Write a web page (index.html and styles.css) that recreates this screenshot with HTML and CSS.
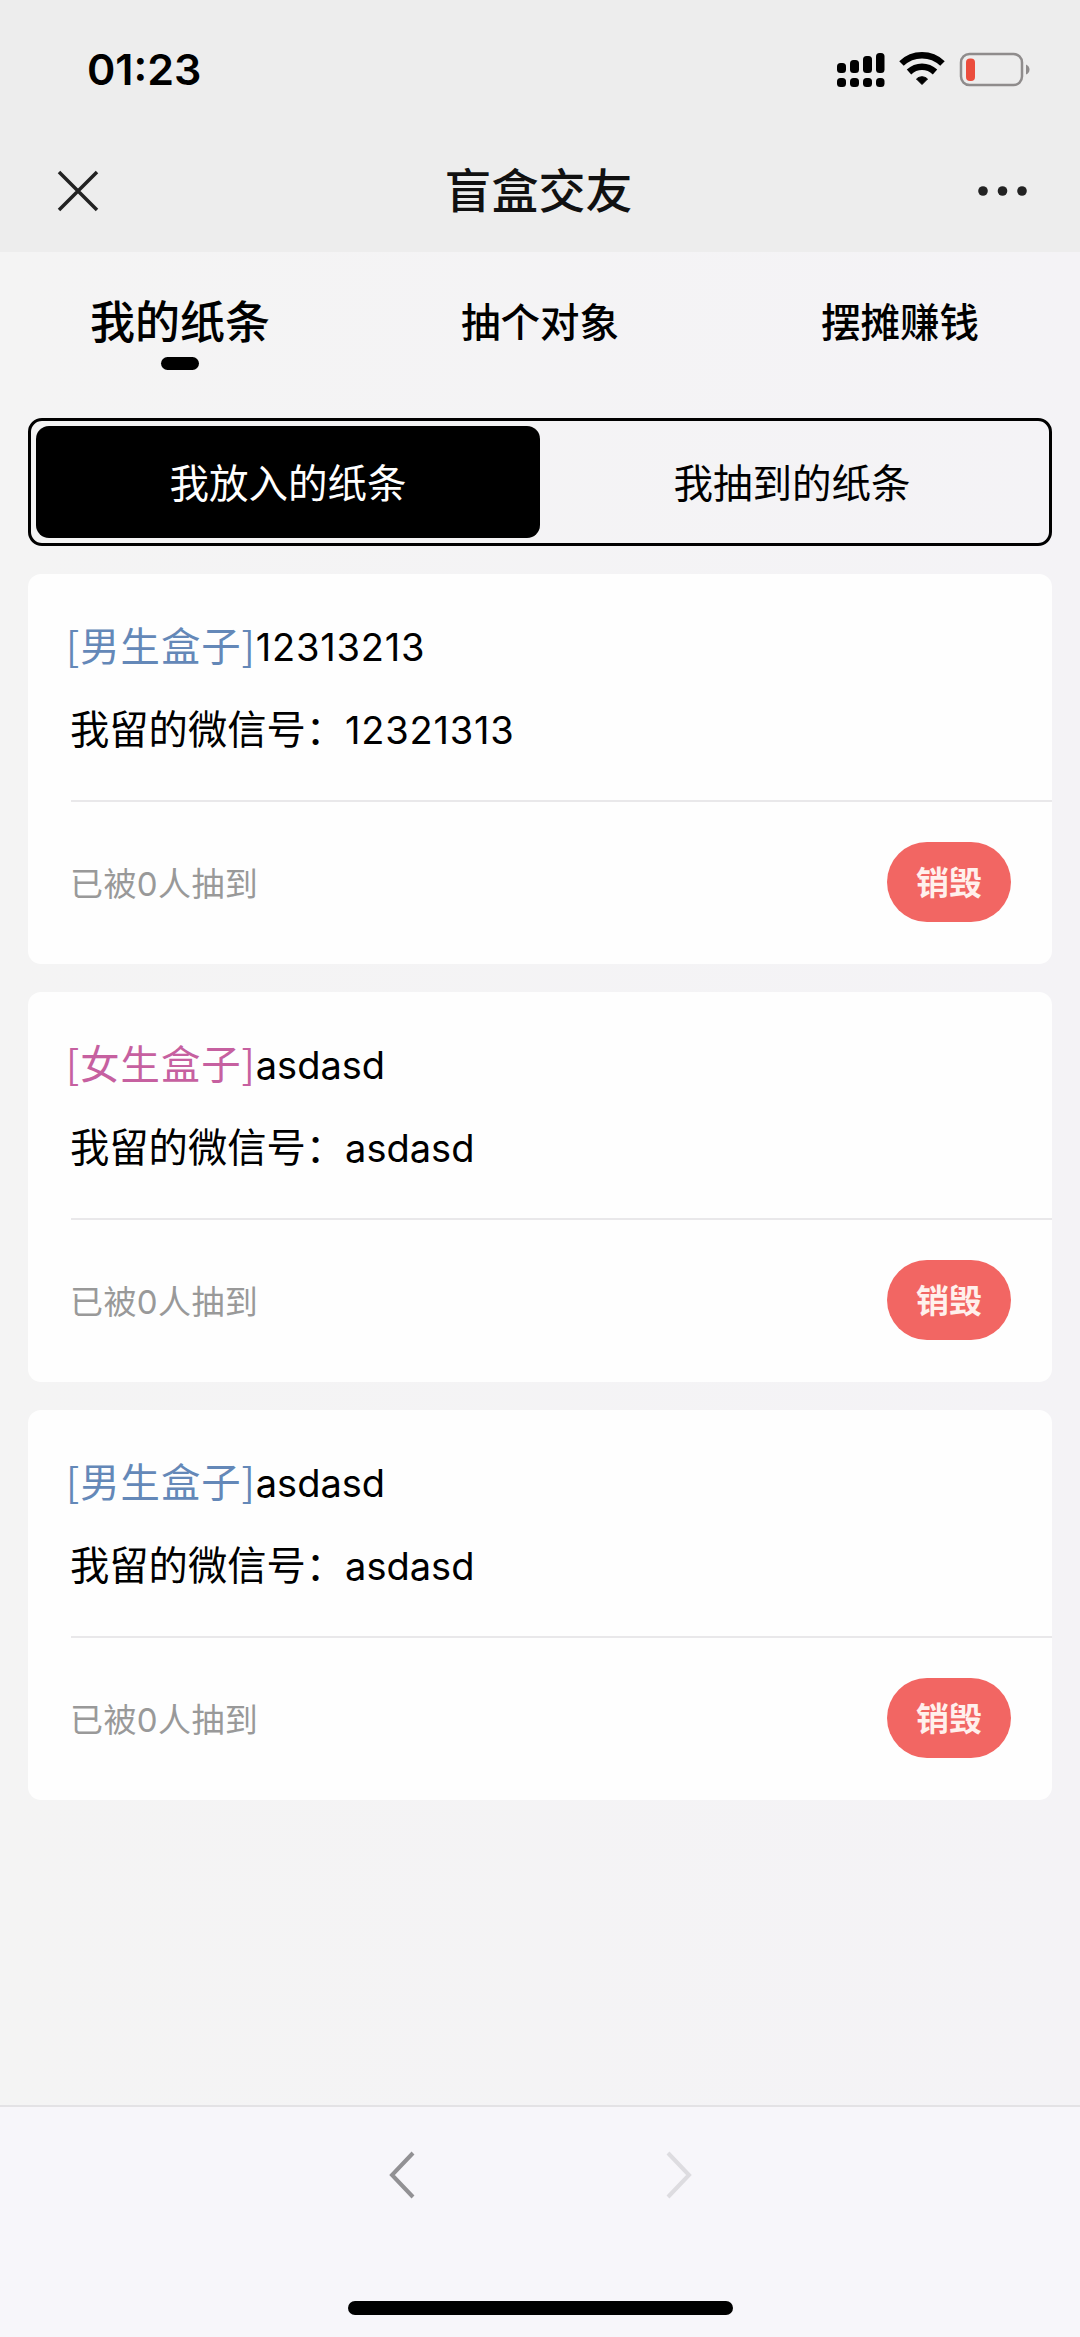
FILE: index.html
```html
<!DOCTYPE html>
<html lang="zh-CN">
<head>
  <meta charset="UTF-8" />
  <meta name="viewport" content="width=device-width, initial-scale=1.0" />
  <title>盲盒交友</title>
  <link rel="stylesheet" href="styles.css">
</head>
<body>
  <header class="header">
    <div class="status-bar">
      <span class="time">01:23</span>
      <svg class="status-icons" width="196" height="40" viewBox="0 0 196 40">
        <g fill="#000">
          <rect x="1" y="14" width="9" height="10" rx="3.5" />
          <rect x="14" y="11" width="9" height="13" rx="3.5" />
          <rect x="27" y="7" width="9" height="17" rx="3.5" />
          <rect x="40" y="4" width="8.5" height="20" rx="3.5" />
          <rect x="1" y="29" width="9" height="9" rx="3.5" />
          <rect x="14" y="29" width="9" height="9" rx="3.5" />
          <rect x="27" y="29" width="9" height="9" rx="3.5" />
          <rect x="40" y="29" width="8.5" height="9" rx="3.5" />
        </g>
        <g fill="none" stroke="#000" stroke-width="6.5">
          <path d="M65.5 14.5C77 3.500 95 3.500 106.500 14.500" />
          <path d="M73 23C80.500 16 91.500 16 99 23" />
        </g>
        <path d="M80.500 30C84 27 88 27 91.500 30L86 35.500Z" fill="#000" stroke="#000" stroke-linejoin="round" />
        <rect x="125" y="5" width="61" height="31" rx="8.500" fill="none" stroke="#8f8c8c" stroke-width="2.500" />
        <rect x="130" y="9.500" width="9" height="22.500" rx="4" fill="#eb4d3d" />
        <path d="M190 15.500Q193.500 17 193.500 20.500T190 25.500Z" fill="#8f8c8c" />
      </svg>
    </div>
    <div class="nav-bar">
      <svg class="icon" width="42" height="42" viewBox="0 0 42 42">
        <path d="M2 2L40 40M40 2L2 40" fill="none" stroke="#222" stroke-width="3.500" />
      </svg>
      <h1>盲盒交友</h1>
      <svg class="icon" width="50" height="12" viewBox="0 0 50 12">
        <g fill="#222">
          <circle cx="5" cy="6" r="4.800" />
          <circle cx="24.500" cy="6" r="4.800" />
          <circle cx="44" cy="6" r="4.800" />
        </g>
      </svg>
    </div>
  </header>

  <nav class="tabs">
    <a class="tab active">我的纸条</a>
    <a class="tab">抽个对象</a>
    <a class="tab">摆摊赚钱</a>
  </nav>

  <main class="content">
    <div class="switch">
      <div class="switch-item selected">我放入的纸条</div>
      <div class="switch-item">我抽到的纸条</div>
    </div>

    <div class="card">
      <div class="card-body">
        <p><span class="label boy">[男生盒子]</span><span class="value digits">12313213</span></p>
        <p>我留的微信号：<span class="value digits">12321313</span></p>
      </div>
      <div class="card-footer">
        <span class="count">已被<span class="number">0</span>人抽到</span>
        <button type="button">销毁</button>
      </div>
    </div>

    <div class="card">
      <div class="card-body">
        <p><span class="label girl">[女生盒子]</span><span class="value">asdasd</span></p>
        <p>我留的微信号：<span class="value">asdasd</span></p>
      </div>
      <div class="card-footer">
        <span class="count">已被<span class="number">0</span>人抽到</span>
        <button type="button">销毁</button>
      </div>
    </div>

    <div class="card">
      <div class="card-body">
        <p><span class="label boy">[男生盒子]</span><span class="value">asdasd</span></p>
        <p>我留的微信号：<span class="value">asdasd</span></p>
      </div>
      <div class="card-footer">
        <span class="count">已被<span class="number">0</span>人抽到</span>
        <button type="button">销毁</button>
      </div>
    </div>
  </main>

  <footer class="toolbar">
    <div class="toolbar-buttons">
      <svg width="28" height="50" viewBox="0 0 28 50">
        <path d="M25 3L4 25L25 47" fill="none" stroke="#929194" stroke-width="4" />
      </svg>
      <svg width="28" height="50" viewBox="0 0 28 50">
        <path d="M3 3L24 25L3 47" fill="none" stroke="#dddce0" stroke-width="4" />
      </svg>
    </div>
    <div class="home-bar"></div>
  </footer>
</body>
</html>
```

FILE: styles.css
```css
* {
  box-sizing: border-box;
}

body {
  display: flex;
  flex-direction: column;
  height: 2337px;
  margin: 0;
  background: linear-gradient(to right, #f4f4f4, #f4f3f6);
  color: #000;
  font-family: 'Noto Sans CJK SC', sans-serif;
}

.header {
  height: 252px;
  background: #ededed;
}

.status-bar {
  display: flex;
  align-items: center;
  justify-content: space-between;
  height: 137px;
  padding: 0 48px 0 87px;
}

.time {
  font-family: 'Inter', sans-serif;
  font-size: 43px;
  font-weight: 600;
}

.nav-bar {
  display: flex;
  align-items: center;
  justify-content: space-between;
  height: 107px;
  padding: 0 52px 0 57px;
}

h1 {
  margin: 0;
  padding-bottom: 5px;
  font-size: 47px;
  font-weight: 500;
  line-height: 60px;
  color: #111;
}

.tabs {
  display: grid;
  grid-template-columns: repeat(3, 1fr);
  height: 166px;
  padding-top: 38px;
}

.tab {
  display: flex;
  flex-direction: column;
  align-items: center;
  height: 80px;
  font-size: 39.5px;
  font-weight: 500;
  line-height: 59px;
}

.tab.active {
  font-size: 45px;
  line-height: 60px;
}

.tab.active::after {
  content: '';
  width: 38px;
  height: 14px;
  margin-top: 7px;
  background: #000;
  border-radius: 7px;
}

.content {
  flex: 1;
  padding: 0 28px;
}

.switch {
  display: flex;
  height: 128px;
  margin-bottom: 28px;
  padding: 5px;
  border: 3px solid #000;
  border-radius: 14px;
}

.switch-item {
  flex: 1;
  font-size: 39.5px;
  line-height: 109px;
  text-align: center;
  border-radius: 13px;
}

.switch-item.selected {
  background: #000;
  color: #fff;
}

.card {
  height: 390px;
  margin-bottom: 28px;
  background: #fefefe;
  border-radius: 13px;
}

.card-body {
  height: 228px;
  margin-left: 43px;
  padding-top: 38px;
  border-bottom: 2px solid #e9e8ea;
}

p {
  margin: 0 0 20px -1px;
  font-size: 39.3px;
  line-height: 63px;
}

p + p {
  margin-bottom: 0;
}

.label {
  margin-left: -4px;
  letter-spacing: 1px;
}

.boy {
  color: #6488b8;
}

.girl {
  color: #c660a0;
}

.value {
  font-family: 'Inter', sans-serif;
  font-size: 38px;
  line-height: 1;
}

.digits {
  letter-spacing: 0.8px;
}

.card-footer {
  display: flex;
  align-items: center;
  justify-content: space-between;
  height: 160px;
  padding: 0 41px 0 42px;
}

.count {
  font-size: 33px;
  letter-spacing: 0.4px;
  color: #999;
}

.number {
  font-family: 'Inter', sans-serif;
}

button {
  width: 124px;
  height: 80px;
  padding: 0 0 2px;
  background: #f26663;
  color: #fff0ec;
  font-family: inherit;
  font-size: 33px;
  font-weight: 700;
  border: none;
  border-radius: 40px;
}

.toolbar {
  display: flex;
  flex-direction: column;
  align-items: center;
  justify-content: space-between;
  height: 232px;
  padding: 43px 0 22px;
  background: #f7f6fa;
  border-top: 2px solid #e3e2e5;
}

.toolbar-buttons {
  display: flex;
  gap: 249px;
}

.home-bar {
  width: 385px;
  height: 14px;
  background: #000;
  border-radius: 7px;
}
```
